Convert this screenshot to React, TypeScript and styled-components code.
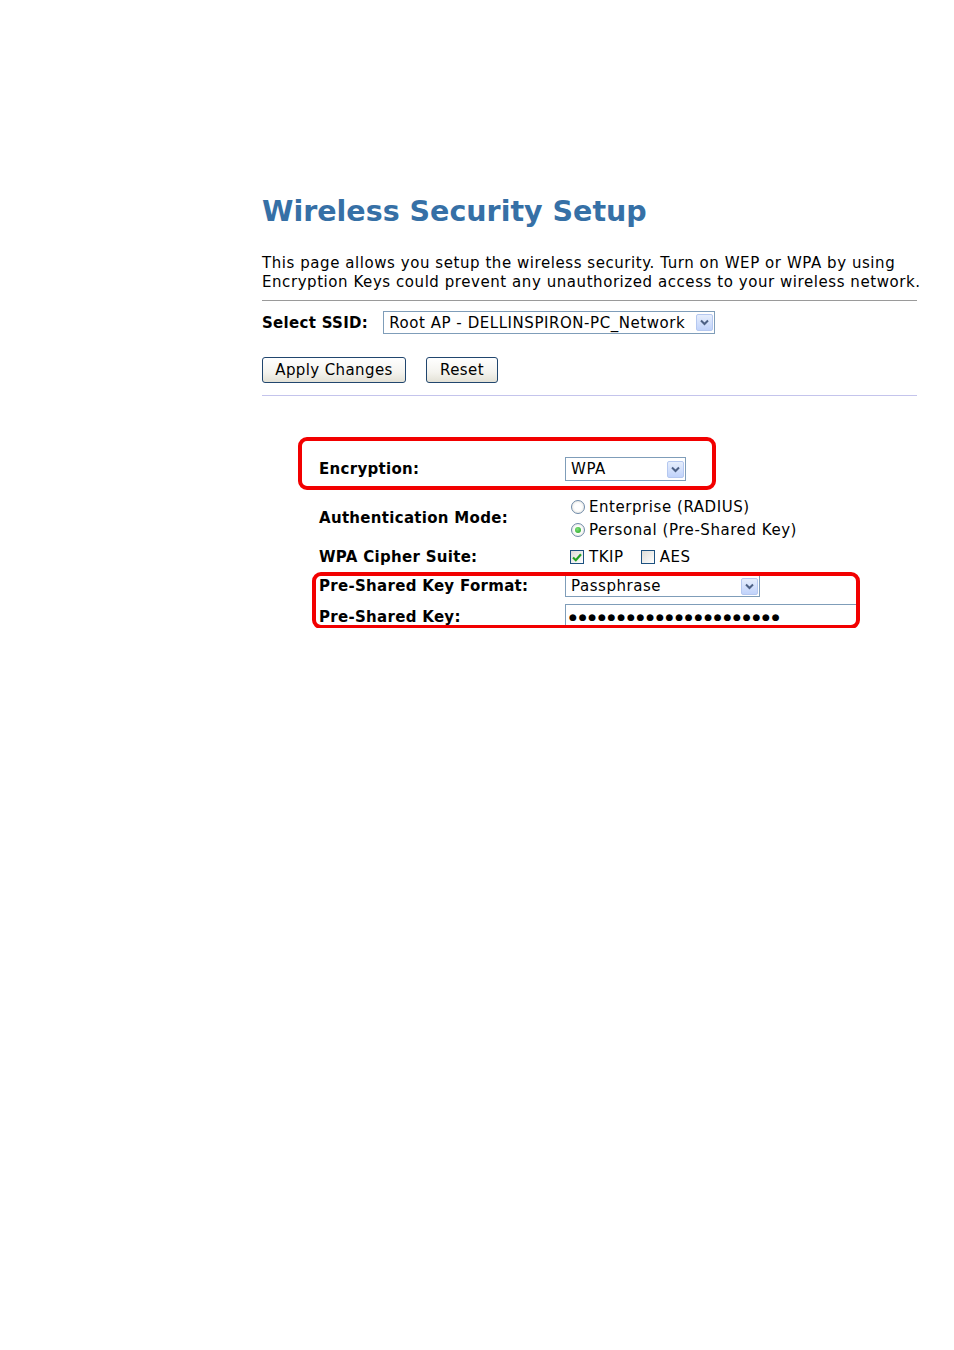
import React from 'react';
import styled, { createGlobalStyle } from 'styled-components';

const Global = createGlobalStyle`
  body {
    margin: 0;
    background: #ffffff;
    font-family: "DejaVu Sans", Verdana, sans-serif;
    color: #000000;
  }
`;

const Page = styled.div`
  width: 655px;
  padding: 190px 0 0 262px;
`;

const Title = styled.h1`
  margin: 0;
  font-size: 28.5px;
  line-height: 44px;
  font-weight: bold;
  color: #3670a6;
`;

const Intro = styled.p`
  margin: 20px 0 0;
  font-size: 15px;
  letter-spacing: 0.56px;
  line-height: 19px;
  white-space: nowrap;
`;

const Rule = styled.div<{ $color: string; $top: number }>`
  margin-top: ${(p) => p.$top}px;
  height: 1px;
  background: ${(p) => p.$color};
`;

const SsidRow = styled.div`
  display: flex;
  align-items: center;
  gap: 15px;
  height: 23px;
  margin-top: 10px;
`;

const Label = styled.span`
  font-size: 15px;
  letter-spacing: 0.3px;
  font-weight: bold;
  white-space: nowrap;
`;

const Select = styled.div<{ $w: number; $h: number }>`
  box-sizing: border-box;
  width: ${(p) => p.$w}px;
  height: ${(p) => p.$h}px;
  border: 1px solid #7f9db9;
  display: flex;
  align-items: center;
  justify-content: space-between;
  padding: 0 1px 0 5px;
  font-size: 15px;
  letter-spacing: 0.55px;
  background: #fff;
  white-space: nowrap;
`;

const Arrow = styled.span`
  width: 17px;
  height: 17px;
  flex-shrink: 0;
  box-sizing: border-box;
  border: 1px solid #b5c8f0;
  border-radius: 2px;
  background: linear-gradient(#e6eefc, #c1d3fb);
  display: flex;
  align-items: center;
  justify-content: center;
`;

const ButtonRow = styled.div`
  display: flex;
  gap: 20px;
  margin-top: 23px;
`;

const Button = styled.button<{ $w: number }>`
  box-sizing: border-box;
  width: ${(p) => p.$w}px;
  height: 26px;
  border: 1px solid #21466e;
  border-radius: 3px;
  background: linear-gradient(#ffffff 0%, #f4f3ee 60%, #e3e1d6 100%);
  font-family: inherit;
  font-size: 15px;
  letter-spacing: 0.4px;
  color: #000;
  padding: 0;
`;

const Form = styled.div`
  position: relative;
  margin-top: 59px;
  padding-left: 57px;
`;

const Row = styled.div<{ $h: number; $mb?: number }>`
  display: grid;
  grid-template-columns: 246px auto;
  align-items: center;
  height: ${(p) => p.$h}px;
  margin-bottom: ${(p) => p.$mb ?? 0}px;
`;

const Options = styled.div`
  display: flex;
  flex-direction: column;
  gap: 4px;
  font-size: 15px;
  letter-spacing: 0.55px;
`;

const Option = styled.label`
  display: flex;
  align-items: center;
  gap: 4px;
  height: 19px;
`;

const Radio = styled.span<{ $on?: boolean }>`
  box-sizing: border-box;
  width: 14px;
  height: 14px;
  margin-left: 6px;
  border-radius: 50%;
  border: 1px solid #6f8aa8;
  background: radial-gradient(circle, #ffffff 40%, #dcdcd5 100%);
  display: flex;
  align-items: center;
  justify-content: center;
  &::after {
    content: '';
    display: ${(p) => (p.$on ? 'block' : 'none')};
    width: 6px;
    height: 6px;
    border-radius: 50%;
    background: radial-gradient(circle at 40% 35%, #7fe07a, #21a121);
  }
`;

const Checks = styled.div`
  display: flex;
  align-items: center;
  font-size: 15px;
  letter-spacing: 0.55px;
`;

const Box = styled.span`
  box-sizing: border-box;
  width: 14px;
  height: 14px;
  margin: 0 5px 0 5px;
  border: 1px solid #1c5180;
  background: linear-gradient(135deg, #dcdcd7, #ffffff);
  display: flex;
  align-items: center;
  justify-content: center;
`;

const Spacer = styled.span`
  width: 12px;
`;

const KeyInput = styled.div`
  box-sizing: border-box;
  width: 292px;
  height: 26px;
  border: 1px solid #7f9db9;
  border-right: none;
  display: flex;
  align-items: center;
  padding-left: 3px;
  font-size: 9px;
  letter-spacing: 1.8px;
  white-space: nowrap;
  overflow: hidden;
`;

const Mark = styled.div<{ $l: number; $t: number; $w: number; $h: number }>`
  position: absolute;
  box-sizing: border-box;
  left: ${(p) => p.$l}px;
  top: ${(p) => p.$t}px;
  width: ${(p) => p.$w}px;
  height: ${(p) => p.$h}px;
  border: 4px solid #f20000;
  border-radius: 9px;
  pointer-events: none;
`;

const Chevron = () => (
  <svg width="9" height="7" viewBox="0 0 9 7">
    <path d="M1 1.5 L4.5 5 L8 1.5" fill="none" stroke="#4d6185" strokeWidth="2" />
  </svg>
);

const Tick = () => (
  <svg width="10" height="9" viewBox="0 0 10 9">
    <path d="M1 4.5 L3.8 7.2 L9 1.3" fill="none" stroke="#21a121" strokeWidth="2.2" />
  </svg>
);

const Dropdown = ({ w, h, value }: { w: number; h: number; value: string }) => (
  <Select $w={w} $h={h}>
    <span>{value}</span>
    <Arrow>
      <Chevron />
    </Arrow>
  </Select>
);

export default function App() {
  return (
    <>
      <Global />
      <Page>
        <Title>Wireless Security Setup</Title>
        <Intro>
          This page allows you setup the wireless security. Turn on WEP or WPA by using
          <br />
          Encryption Keys could prevent any unauthorized access to your wireless network.
        </Intro>
        <Rule $color="#9a9a9a" $top={8} />
        <SsidRow>
          <Label>Select SSID:</Label>
          <Dropdown w={332} h={23} value="Root AP - DELLINSPIRON-PC_Network" />
        </SsidRow>
        <ButtonRow>
          <Button $w={144}>Apply Changes</Button>
          <Button $w={72}>Reset</Button>
        </ButtonRow>
        <Rule $color="#c4c4ec" $top={12} />
        <Form>
          <Row $h={28} $mb={7}>
            <Label>Encryption:</Label>
            <Dropdown w={121} h={24} value="WPA" />
          </Row>
          <Row $h={56}>
            <Label>Authentication Mode:</Label>
            <Options>
              <Option>
                <Radio />
                Enterprise (RADIUS)
              </Option>
              <Option>
                <Radio $on />
                Personal (Pre-Shared Key)
              </Option>
            </Options>
          </Row>
          <Row $h={22}>
            <Label>WPA Cipher Suite:</Label>
            <Checks>
              <Box>
                <Tick />
              </Box>
              TKIP
              <Spacer />
              <Box />
              AES
            </Checks>
          </Row>
          <Row $h={36}>
            <Label>Pre-Shared Key Format:</Label>
            <Dropdown w={195} h={22} value="Passphrase" />
          </Row>
          <Row $h={24}>
            <Label>Pre-Shared Key:</Label>
            <KeyInput>{'●'.repeat(22)}</KeyInput>
          </Row>
          <Mark $l={36} $t={-18} $w={418} $h={53} />
          <Mark $l={50} $t={117} $w={548} $h={57} />
        </Form>
      </Page>
    </>
  );
}
